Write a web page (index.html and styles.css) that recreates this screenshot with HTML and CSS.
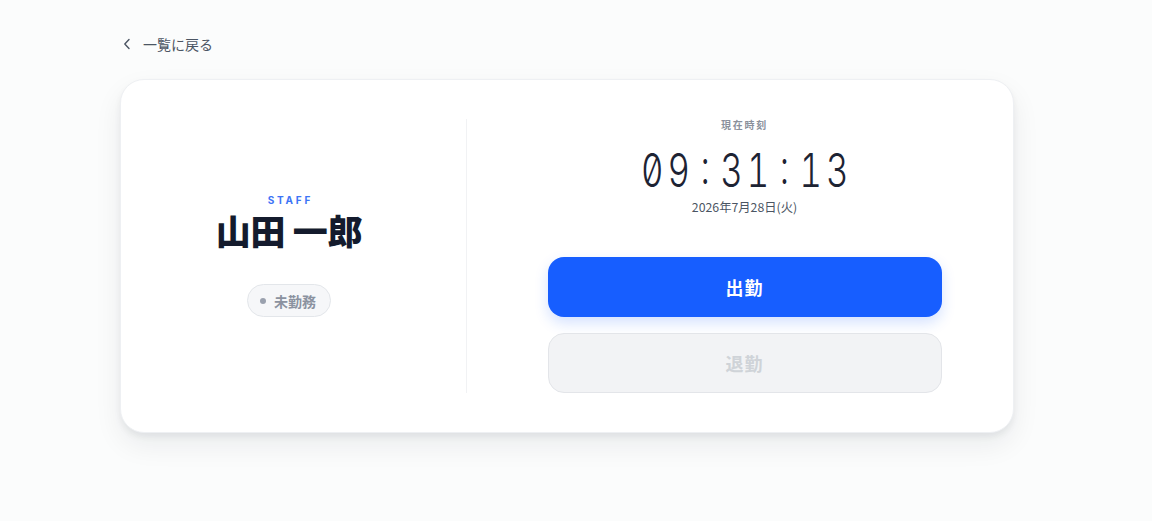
FILE: index.html
```html
<!DOCTYPE html>
<html lang="ja">
<head>
<meta charset="utf-8">
<title>打刻</title>
<link rel="stylesheet" href="styles.css">
</head>
<body>
<div class="page">
  <a class="back" href="#">
    <svg class="back-icon" width="8" height="12" viewBox="0 0 8 12" fill="none"><path d="M6 1.5 L1.8 6 L6 10.5" stroke="#4b5563" stroke-width="1.4" stroke-linecap="round" stroke-linejoin="round"/></svg>
    <span>一覧に戻る</span>
  </a>
  <div class="card">
    <div class="left">
      <div class="role">STAFF</div>
      <div class="name">山田 一郎</div>
      <div class="status"><span class="dot"></span>未勤務</div>
    </div>
    <div class="divider"></div>
    <div class="right">
      <div class="label">現在時刻</div>
      <div class="time"><span class="c">0</span><span class="c">9</span><span class="c sep">:</span><span class="c">3</span><span class="c">1</span><span class="c sep">:</span><span class="c">1</span><span class="c">3</span></div>
      <div class="date">2026年7月28日(火)</div>
      <div class="actions">
        <button class="btn btn-in">出勤</button>
        <button class="btn btn-out" disabled>退勤</button>
      </div>
    </div>
  </div>
</div>
</body>
</html>
```
FILE: styles.css
```css
* { box-sizing: border-box; }
html, body { margin: 0; padding: 0; }
body {
  background: #fbfcfc;
  font-family: "Noto Sans CJK JP", "Noto Sans", sans-serif;
  color: #111827;
  width: 1152px;
  height: 521px;
  overflow: hidden;
}
.page {
  padding: 34px 0 0 120px;
  width: 1014px;
}
.back {
  display: flex;
  align-items: center;
  gap: 12px;
  height: 20px;
  padding-left: 3px;
  color: #4b5563;
  font-size: 14px;
  text-decoration: none;
  line-height: 20px;
}
.back-icon { display: block; }
.card {
  margin-top: 25px;
  width: 894px;
  height: 354px;
  background: #ffffff;
  border: 1px solid #eef0f3;
  border-radius: 24px;
  box-shadow: 0 4px 6px rgba(17, 24, 39, 0.06), 0 12px 28px rgba(17, 24, 39, 0.07);
  padding: 39px 39px;
  display: grid;
  grid-template-columns: 258px 1px 1fr;
  column-gap: 48px;
}
.left {
  display: flex;
  flex-direction: column;
  align-items: center;
  justify-content: center;
  padding-bottom: 4px;
}
.role {
  font-family: "Inter", "Noto Sans", sans-serif;
  font-size: 10px;
  font-weight: 700;
  letter-spacing: 0.28em;
  color: #3d74f6;
  line-height: 14px;
  margin-left: 0.28em;
  margin-top: 2px;
}
.name {
  font-size: 35px;
  font-weight: 900;
  color: #141b2d;
  line-height: 44px;
  margin-top: 1px;
  letter-spacing: -0.01em;
}
.status {
  margin-top: 32px;
  display: flex;
  align-items: center;
  gap: 8px;
  height: 33px;
  padding: 0 14px 0 12px;
  border: 1px solid #e3e6ea;
  background: #f6f7f9;
  border-radius: 999px;
  font-size: 14px;
  font-weight: 700;
  color: #8b92a0;
}
.dot {
  width: 6px;
  height: 6px;
  border-radius: 50%;
  background: #9aa1ae;
}
.divider {
  background: #f1f2f4;
}
.right {
  display: flex;
  flex-direction: column;
  align-items: center;
}
.label {
  font-size: 10px;
  font-weight: 700;
  color: #8a909c;
  letter-spacing: 0.18em;
  line-height: 14px;
  margin-top: -1px;
}
.time {
  font-family: "Inter", sans-serif;
  font-weight: 300;
  font-size: 47px;
  line-height: 52px;
  color: #1d2333;
  font-feature-settings: "tnum" 1, "zero" 1;
  margin-top: 12px;
  display: flex;
  transform: scaleX(0.74);
}
.time .c {
  display: block;
  width: 35.7px;
  text-align: center;
}
.time .sep {
  position: relative;
  top: -3px;
}
.date {
  font-size: 12.3px;
  color: #4b5563;
  line-height: 16px;
  margin-top: 3px;
}
.actions {
  margin-top: auto;
  width: 394px;
  display: flex;
  flex-direction: column;
  gap: 16px;
}
.btn {
  height: 60px;
  border-radius: 16px;
  font-family: "Noto Sans CJK JP", sans-serif;
  font-size: 18px;
  font-weight: 700;
  letter-spacing: 0.06em;
  border: 1px solid transparent;
  cursor: pointer;
}
.btn-in {
  background: #175eff;
  color: #ffffff;
  box-shadow: 0 6px 14px rgba(23, 94, 255, 0.18);
}
.btn-out {
  background: #f2f3f5;
  border-color: #e3e5e9;
  color: #cfd3d8;
  cursor: default;
}
```
